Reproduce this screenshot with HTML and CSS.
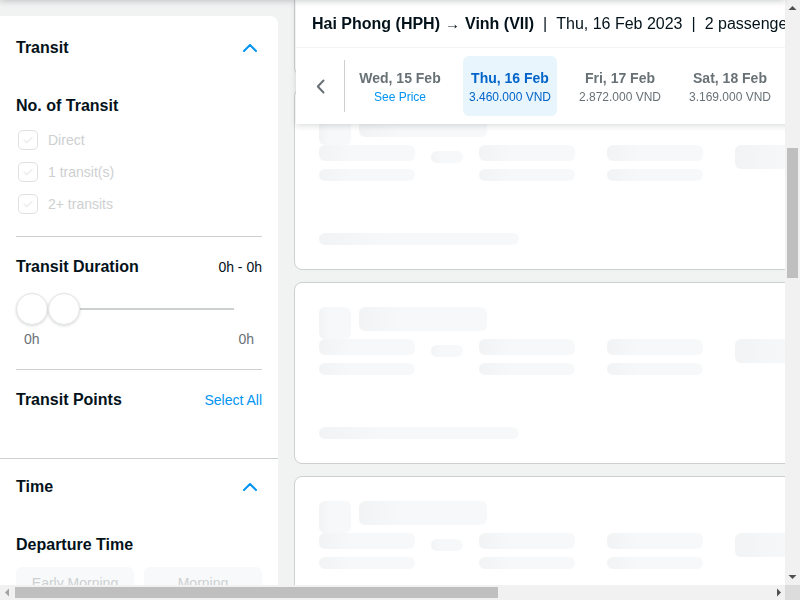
FILE: index.html
```html
<!DOCTYPE html>
<html lang="en">
<head>
<meta charset="utf-8">
<title>Hai Phong → Vinh flights</title>
<link rel="stylesheet" href="styles.css">
</head>
<body>
<div class="frame">
<div class="topshade"></div>
<div class="viewport" id="viewport">
<div class="page">
  <aside class="sidebar">
    <section class="fsection">
      <div class="fhead">
        <h3>Transit</h3>
        <span class="chev"><svg width="14" height="8" viewBox="0 0 14 8"><path d="M1 7l6-6 6 6" fill="none" stroke="#0194f3" stroke-width="2" stroke-linecap="round" stroke-linejoin="round"/></svg></span>
      </div>
      <h4 class="subtitle">No. of Transit</h4>
      <ul class="checks">
        <li><span class="cbox"><span class="cbox-in"><svg width="10" height="8" viewBox="0 0 10 8"><path d="M1 4l2.8 2.8L9 1.4" fill="none" stroke="#ebeded" stroke-width="1.4" stroke-linecap="round" stroke-linejoin="round"/></svg></span></span>Direct</li>
        <li><span class="cbox"><span class="cbox-in"><svg width="10" height="8" viewBox="0 0 10 8"><path d="M1 4l2.8 2.8L9 1.4" fill="none" stroke="#ebeded" stroke-width="1.4" stroke-linecap="round" stroke-linejoin="round"/></svg></span></span>1 transit(s)</li>
        <li><span class="cbox"><span class="cbox-in"><svg width="10" height="8" viewBox="0 0 10 8"><path d="M1 4l2.8 2.8L9 1.4" fill="none" stroke="#ebeded" stroke-width="1.4" stroke-linecap="round" stroke-linejoin="round"/></svg></span></span>2+ transits</li>
      </ul>
      <hr class="divider">
      <div class="rowhead"><h4>Transit Duration</h4><span class="range">0h - 0h</span></div>
      <div class="slider">
        <div class="track"></div>
        <span class="knob knob-a"></span>
        <span class="knob knob-b"></span>
      </div>
      <div class="slider-labels"><span>0h</span><span>0h</span></div>
      <hr class="divider divider-b">
      <div class="rowhead"><h4>Transit Points</h4><a class="link" href="#">Select All</a></div>
      <div class="points"></div>
    </section>
    <section class="fsection">
      <div class="fhead">
        <h3>Time</h3>
        <span class="chev"><svg width="14" height="8" viewBox="0 0 14 8"><path d="M1 7l6-6 6 6" fill="none" stroke="#0194f3" stroke-width="2" stroke-linecap="round" stroke-linejoin="round"/></svg></span>
      </div>
      <h4 class="subtitle">Departure Time</h4>
      <div class="timegrid">
        <div class="tbtn">Early Morning<small>00:00 - 06:00</small></div>
        <div class="tbtn">Morning<small>06:00 - 12:00</small></div>
        <div class="tbtn">Afternoon<small>12:00 - 18:00</small></div>
        <div class="tbtn">Night<small>18:00 - 24:00</small></div>
      </div>
      <h4 class="subtitle">Arrival Time</h4>
      <div class="timegrid">
        <div class="tbtn">Early Morning<small>00:00 - 06:00</small></div>
        <div class="tbtn">Morning<small>06:00 - 12:00</small></div>
        <div class="tbtn">Afternoon<small>12:00 - 18:00</small></div>
        <div class="tbtn">Night<small>18:00 - 24:00</small></div>
      </div>
      <div class="points"></div>
    </section>
  </aside>

  <main class="results">
    <header class="route">
      <div class="route-title"><b>Hai Phong (HPH)</b><span class="arrow">→</span><b>Vinh (VII)</b><span class="sep">|</span>Thu, 16 Feb 2023<span class="sep">|</span>2 passengers</div>
      <div class="dates">
        <span class="prev"><svg width="9" height="15" viewBox="0 0 9 15"><path d="M7.5 1.5L1.8 7.5l5.7 6" fill="none" stroke="#687176" stroke-width="2" stroke-linecap="round" stroke-linejoin="round"/></svg></span>
        <span class="vline"></span>
        <div class="day"><strong>Wed, 15 Feb</strong><span class="see">See Price</span></div>
        <div class="day day-on"><strong>Thu, 16 Feb</strong><span>3.460.000 VND</span></div>
        <div class="day"><strong>Fri, 17 Feb</strong><span>2.872.000 VND</span></div>
        <div class="day"><strong>Sat, 18 Feb</strong><span>3.169.000 VND</span></div>
        <div class="day"><strong>Sun, 19 Feb</strong><span>3.025.000 VND</span></div>
        <div class="day"><strong>Mon, 20 Feb</strong><span>2.910.000 VND</span></div>
      </div>
    </header>

    <div class="summary">
      <h2 class="sum-title">Departure flight</h2>
      <div class="sortbar"></div>
    </div>

    <div class="card"><div class="card-top"><span class="sk sk-logo"></span><span class="sk sk-name"></span></div><div class="card-row"><div class="col"><span class="sk bar16"></span><span class="sk bar12"></span></div><span class="sk sk-dur"></span><div class="col"><span class="sk bar16"></span><span class="sk bar12"></span></div><div class="col col-gap"><span class="sk bar16"></span><span class="sk bar12"></span></div><span class="sk sk-price"></span></div><span class="sk sk-foot"></span></div>
    <div class="card"><div class="card-top"><span class="sk sk-logo"></span><span class="sk sk-name"></span></div><div class="card-row"><div class="col"><span class="sk bar16"></span><span class="sk bar12"></span></div><span class="sk sk-dur"></span><div class="col"><span class="sk bar16"></span><span class="sk bar12"></span></div><div class="col col-gap"><span class="sk bar16"></span><span class="sk bar12"></span></div><span class="sk sk-price"></span></div><span class="sk sk-foot"></span></div>
    <div class="card"><div class="card-top"><span class="sk sk-logo"></span><span class="sk sk-name"></span></div><div class="card-row"><div class="col"><span class="sk bar16"></span><span class="sk bar12"></span></div><span class="sk sk-dur"></span><div class="col"><span class="sk bar16"></span><span class="sk bar12"></span></div><div class="col col-gap"><span class="sk bar16"></span><span class="sk bar12"></span></div><span class="sk sk-price"></span></div><span class="sk sk-foot"></span></div>
    <div class="card"><div class="card-top"><span class="sk sk-logo"></span><span class="sk sk-name"></span></div><div class="card-row"><div class="col"><span class="sk bar16"></span><span class="sk bar12"></span></div><span class="sk sk-dur"></span><div class="col"><span class="sk bar16"></span><span class="sk bar12"></span></div><div class="col col-gap"><span class="sk bar16"></span><span class="sk bar12"></span></div><span class="sk sk-price"></span></div><span class="sk sk-foot"></span></div>
    <div class="card"><div class="card-top"><span class="sk sk-logo"></span><span class="sk sk-name"></span></div><div class="card-row"><div class="col"><span class="sk bar16"></span><span class="sk bar12"></span></div><span class="sk sk-dur"></span><div class="col"><span class="sk bar16"></span><span class="sk bar12"></span></div><div class="col col-gap"><span class="sk bar16"></span><span class="sk bar12"></span></div><span class="sk sk-price"></span></div><span class="sk sk-foot"></span></div>
    <div class="card"><div class="card-top"><span class="sk sk-logo"></span><span class="sk sk-name"></span></div><div class="card-row"><div class="col"><span class="sk bar16"></span><span class="sk bar12"></span></div><span class="sk sk-dur"></span><div class="col"><span class="sk bar16"></span><span class="sk bar12"></span></div><div class="col col-gap"><span class="sk bar16"></span><span class="sk bar12"></span></div><span class="sk sk-price"></span></div><span class="sk sk-foot"></span></div>
    <div class="card"><div class="card-top"><span class="sk sk-logo"></span><span class="sk sk-name"></span></div><div class="card-row"><div class="col"><span class="sk bar16"></span><span class="sk bar12"></span></div><span class="sk sk-dur"></span><div class="col"><span class="sk bar16"></span><span class="sk bar12"></span></div><div class="col col-gap"><span class="sk bar16"></span><span class="sk bar12"></span></div><span class="sk sk-price"></span></div><span class="sk sk-foot"></span></div>
    <div class="card"><div class="card-top"><span class="sk sk-logo"></span><span class="sk sk-name"></span></div><div class="card-row"><div class="col"><span class="sk bar16"></span><span class="sk bar12"></span></div><span class="sk sk-dur"></span><div class="col"><span class="sk bar16"></span><span class="sk bar12"></span></div><div class="col col-gap"><span class="sk bar16"></span><span class="sk bar12"></span></div><span class="sk sk-price"></span></div><span class="sk sk-foot"></span></div>
    <div class="card"><div class="card-top"><span class="sk sk-logo"></span><span class="sk sk-name"></span></div><div class="card-row"><div class="col"><span class="sk bar16"></span><span class="sk bar12"></span></div><span class="sk sk-dur"></span><div class="col"><span class="sk bar16"></span><span class="sk bar12"></span></div><div class="col col-gap"><span class="sk bar16"></span><span class="sk bar12"></span></div><span class="sk sk-price"></span></div><span class="sk sk-foot"></span></div>
    <div class="card"><div class="card-top"><span class="sk sk-logo"></span><span class="sk sk-name"></span></div><div class="card-row"><div class="col"><span class="sk bar16"></span><span class="sk bar12"></span></div><span class="sk sk-dur"></span><div class="col"><span class="sk bar16"></span><span class="sk bar12"></span></div><div class="col col-gap"><span class="sk bar16"></span><span class="sk bar12"></span></div><span class="sk sk-price"></span></div><span class="sk sk-foot"></span></div>
    <div class="card"><div class="card-top"><span class="sk sk-logo"></span><span class="sk sk-name"></span></div><div class="card-row"><div class="col"><span class="sk bar16"></span><span class="sk bar12"></span></div><span class="sk sk-dur"></span><div class="col"><span class="sk bar16"></span><span class="sk bar12"></span></div><div class="col col-gap"><span class="sk bar16"></span><span class="sk bar12"></span></div><span class="sk sk-price"></span></div><span class="sk sk-foot"></span></div>
  </main>
</div>
</div>

<div class="vbar">
  <span class="sbtn"><svg width="15" height="15" viewBox="0 0 15 15"><path d="M3.5 10h8L7.5 6z" fill="#505050"/></svg></span>
  <div class="vtrack"><div class="vthumb"></div></div>
  <span class="sbtn"><svg width="15" height="15" viewBox="0 0 15 15"><path d="M3.5 5h8L7.5 9z" fill="#505050"/></svg></span>
</div>
<div class="hbar">
  <span class="sbtn"><svg width="15" height="15" viewBox="0 0 15 15"><path d="M9 3.5v8L5 7.5z" fill="#a3a3a3"/></svg></span>
  <div class="htrack"><div class="hthumb"></div></div>
  <span class="sbtn"><svg width="15" height="15" viewBox="0 0 15 15"><path d="M7 3.5v8l4-4z" fill="#505050"/></svg></span>
</div>
<div class="corner"></div>
</div>
<script src="script.js"></script>
</body>
</html>
```

FILE: styles.css
```css
* { box-sizing: border-box; }
html, body { margin: 0; padding: 0; }
body {
  overflow: hidden;
  background: #f1f2f2;
  font-family: "Liberation Sans", Arial, sans-serif;
  color: #03121a;
}
h2, h3, h4, p, ul { margin: 0; padding: 0; }
ul { list-style: none; }
a { text-decoration: none; }

/* ---------- window frame with scrollbars ---------- */
.frame {
  position: relative;
  display: grid;
  grid-template-columns: 785px 15px;
  grid-template-rows: 585px 15px;
  width: 800px;
  height: 600px;
  overflow: hidden;
}
.viewport {
  overflow: hidden;
}
.topshade {
  position: absolute;
  top: -10px;
  left: 0;
  width: 785px;
  height: 10px;
  background: #fff;
  box-shadow: 0 1px 6px rgba(3, 18, 26, 0.22);
  z-index: 20;
}
.vbar, .hbar { display: flex; background: #f1f1f1; }
.vbar { flex-direction: column; }
.sbtn { flex: none; width: 15px; height: 15px; display: block; }
.sbtn svg { display: block; }
.vtrack { flex: 1; padding: 0 2px; }
.vthumb { height: 130px; margin-top: 133px; background: #bfbfbf; }
.htrack { flex: 1; padding: 2px 0; }
.hthumb { width: 483px; height: 11px; background: #bfbfbf; }
.corner { background: #dcdcdc; }

/* ---------- page ---------- */
.page {
  display: flex;
  align-items: flex-start;
  gap: 16px;
  width: 1227px;
  padding: 16px 16px 77px 0;
}

/* ---------- sidebar ---------- */
.sidebar {
  position: sticky;
  top: 16px;
  flex: none;
  width: 278px;
  background: #fff;
  border-radius: 0 8px 8px 0;
  padding-top: 4px;
}
.fsection {
  padding: 0 16px;
  border-bottom: 1px solid #cdd0d1;
}
.fhead {
  display: flex;
  align-items: center;
  justify-content: space-between;
  height: 56px;
}
.fhead h3 { font-size: 16px; line-height: 24px; font-weight: 700; }
.chev {
  width: 24px;
  height: 24px;
  display: flex;
  align-items: center;
  justify-content: center;
}
.subtitle {
  margin-top: 18px;
  font-size: 16px;
  line-height: 24px;
  font-weight: 700;
}
.checks { margin-top: 6px; }
.checks li {
  height: 32px;
  display: flex;
  align-items: center;
  gap: 8px;
  font-size: 14px;
  color: #cdd0d1;
}
.cbox {
  width: 24px;
  height: 24px;
  display: flex;
  align-items: center;
  justify-content: center;
}
.cbox-in {
  width: 20px;
  height: 20px;
  border: 1px solid #dfe1e1;
  border-radius: 5px;
  display: flex;
  align-items: center;
  justify-content: center;
}
.divider {
  border: 0;
  border-top: 1px solid #cdd0d1;
  height: 0;
  margin: 16px 0 18px;
}
.divider-b { margin-top: 20px; }
.rowhead {
  display: flex;
  align-items: center;
  justify-content: space-between;
  height: 24px;
}
.rowhead h4 { font-size: 16px; font-weight: 700; line-height: 24px; }
.range { font-size: 14px; color: #03121a; }
.link { font-size: 14px; color: #0194f3; }

.slider {
  position: relative;
  height: 32px;
  margin-top: 14px;
  padding-top: 15px;
}
.track {
  height: 2px;
  margin: 0 28px 0 16px;
  background: #cdd0d1;
}
.knob {
  position: absolute;
  top: 0;
  width: 32px;
  height: 32px;
  border-radius: 50%;
  background: #fff;
  border: 1px solid #e3e5e5;
  box-shadow: 0 1px 3px rgba(3, 18, 26, 0.15);
}
.knob-a { left: 0; }
.knob-b { left: 32px; }
.slider-labels {
  display: flex;
  justify-content: space-between;
  padding: 0 8px;
  margin-top: 4px;
  font-size: 14px;
  line-height: 20px;
  color: #687176;
}
.points { height: 46px; }
.fsection + .fsection .points { height: 47px; }

.timegrid {
  display: grid;
  grid-template-columns: 1fr 1fr;
  gap: 10px;
  margin-top: 10px;
}
.tbtn {
  background: #f7f9fa;
  border-radius: 6px;
  padding: 6px 8px 8px;
  text-align: center;
  font-size: 14px;
  line-height: 20px;
  color: #cdd0d1;
}
.tbtn small { display: block; font-size: 12px; line-height: 16px; }

/* ---------- results ---------- */
.results {
  flex: none;
  width: 917px;
  display: flex;
  flex-direction: column;
  gap: 12px;
}
.route {
  position: sticky;
  top: 0;
  z-index: 5;
  margin: 0 2px;
  background: #fff;
  box-shadow: 0 2px 6px rgba(3, 18, 26, 0.14);
}
.route-title {
  padding: 12px 16px 11px;
  font-size: 16px;
  line-height: 24px;
  white-space: nowrap;
  overflow: hidden;
}
.route-title b { font-weight: 700; }
.arrow { font-size: 15px; margin: 0 5px 0 5px; }
.sep { margin: 0 9px; }
.dates {
  display: flex;
  align-items: center;
  border-top: 1px solid #f3f4f4;
  padding: 8px 0;
}
.prev {
  flex: none;
  width: 48px;
  height: 60px;
  display: flex;
  align-items: center;
  justify-content: center;
}
.vline {
  flex: none;
  width: 1px;
  height: 52px;
  background: #cdd0d1;
  margin-right: 8px;
}
.day {
  flex: none;
  width: 94px;
  margin-right: 16px;
  padding: 12px 0 10px;
  text-align: center;
  border-radius: 6px;
  white-space: nowrap;
}
.day strong {
  display: block;
  font-size: 14px;
  line-height: 20px;
  color: #687176;
}
.day span {
  display: block;
  font-size: 12px;
  line-height: 18px;
  color: #687176;
}
.day .see { color: #0194f3; }
.day-on { background: #e8f5fd; }
.day-on strong, .day-on span { color: #0264c8; }

.summary { padding: 24px 0 14px; }
.sum-title { font-size: 20px; line-height: 28px; font-weight: 700; }
.sortbar { height: 56px; margin-top: 12px; background: #fff; border-radius: 8px; }

.card {
  background: #fff;
  border: 1px solid #cdd0d1;
  border-radius: 8px;
  padding: 24px;
}
.sk {
  display: block;
  background: linear-gradient(90deg, #f2f3f4 0%, #f7f8f9 35%, #f7f8f9 100%);
  border-radius: 6px;
}
.card-top { display: flex; gap: 8px; height: 32px; }
.sk-logo { width: 32px; height: 32px; }
.sk-name { width: 128px; height: 24px; }
.card-row { display: flex; align-items: flex-start; }
.col { display: flex; flex-direction: column; gap: 8px; width: 96px; flex: none; }
.col-gap { margin-left: 32px; }
.bar16 { height: 16px; }
.bar12 { height: 12px; }
.sk-dur { flex: none; width: 32px; height: 12px; margin: 6px 16px 0; }
.sk-price { flex: none; width: 160px; height: 24px; margin-left: 32px; }
.sk-foot { width: 200px; height: 12px; margin-top: 52px; }
```

FILE: script.js
```js
var viewport = document.getElementById('viewport');
function restoreScroll() {
  viewport.scrollTop = 598;
  viewport.scrollLeft = 0;
}
restoreScroll();
window.addEventListener('load', restoreScroll);
```
